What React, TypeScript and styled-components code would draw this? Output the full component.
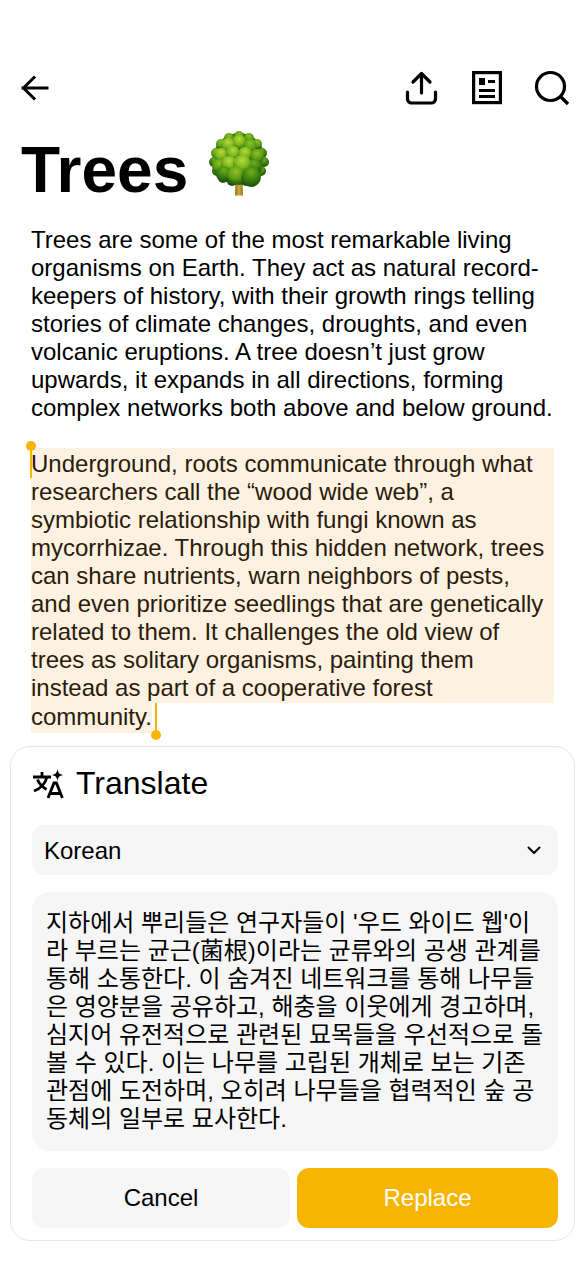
import React from 'react'
import styled, { createGlobalStyle } from 'styled-components'

const GlobalStyle = createGlobalStyle`
  html, body {
    margin: 0;
    padding: 0;
    background: #fff;
  }
  body {
    font-family: "Liberation Sans", Arial, "Noto Sans CJK KR", sans-serif;
    color: #000;
  }
`

const Page = styled.div`
  width: 585px;
  height: 1266px;
  overflow: hidden;
  box-sizing: border-box;
  padding-top: 70px;
`

const TopBar = styled.header`
  display: flex;
  justify-content: space-between;
  align-items: center;
  height: 36px;
  padding: 0 15px 0 20px;
`

const IconRow = styled.div`
  display: flex;
  align-items: center;
  gap: 31px;
`

const Title = styled.h1`
  display: flex;
  align-items: center;
  gap: 21px;
  margin: 23px 0 0 21px;
  height: 70px;
  font-size: 64px;
  line-height: 70px;
  font-weight: 700;
`

const TitleText = styled.span`
  padding-top: 12px;
`

const Article = styled.article`
  padding: 27px 31px 0;
  font-size: 24px;
  line-height: 28px;
  color: #000;
`

const Paragraph = styled.p`
  margin: 0 0 26px;
  width: 523px;
`

const Selection = styled.div`
  position: relative;
  width: 523px;
  color: #2a1c0a;
`

const SelectedBlock = styled.div`
  background: #fdf1e1;
  padding-top: 2px;
  height: 253px;
`

const SelectedTail = styled.div`
  background: #fdf1e1;
  width: fit-content;
  padding-bottom: 2px;
`

const Handle = styled.span<{ $end?: boolean }>`
  position: absolute;
  width: 2px;
  height: 32px;
  background: #f8b500;
  ${p => (p.$end ? 'left: 124px; bottom: -2px;' : 'left: -1px; top: -2px;')}

  &::after {
    content: "";
    position: absolute;
    left: -4px;
    width: 10px;
    height: 10px;
    border-radius: 50%;
    background: #f8b500;
    ${p => (p.$end ? 'bottom: -5px;' : 'top: -5px;')}
  }
`

const Card = styled.section`
  box-sizing: border-box;
  width: 565px;
  height: 495px;
  margin: 13px 0 0 10px;
  padding: 0 16px 12px 21px;
  border: 1px solid #e6e6e6;
  border-radius: 20px;
  display: flex;
  flex-direction: column;
`

const CardHead = styled.div`
  display: flex;
  align-items: center;
  gap: 12px;
  height: 73px;
  font-size: 32px;
  flex: none;
`

const Select = styled.div`
  display: flex;
  align-items: center;
  justify-content: space-between;
  height: 50px;
  margin-top: 5px;
  padding: 1px 17px 0 12px;
  box-sizing: border-box;
  background: #f6f6f6;
  border-radius: 12px;
  font-size: 24px;
  flex: none;
`

const Output = styled.div`
  margin-top: 17px;
  height: 259px;
  box-sizing: border-box;
  padding: 17px 14px 0;
  background: #f6f6f6;
  border-radius: 18px;
  font-family: "Liberation Sans", "Noto Sans CJK KR", sans-serif;
  font-size: 24px;
  line-height: 28px;
  flex: none;
`

const Actions = styled.div`
  display: grid;
  grid-template-columns: 258px 261px;
  gap: 7px;
  margin-top: 17px;
`

const Button = styled.button<{ $primary?: boolean }>`
  height: 60px;
  border: 0;
  border-radius: 12px;
  font-family: inherit;
  font-size: 24px;
  color: ${p => (p.$primary ? '#fff' : '#000')};
  background: ${p => (p.$primary ? '#f8b500' : '#f6f6f6')};
`

const BackIcon = () => (
  <svg width="30" height="30" viewBox="0 0 30 30" fill="none" stroke="#000" strokeWidth="3" strokeLinecap="square">
    <path d="M3 15h24M14 4.500L3.500 15 14 25.500" />
  </svg>
)

const ShareIcon = () => (
  <svg width="35" height="34" viewBox="0 0 35 34" fill="none" stroke="#000" strokeWidth="3.2" strokeLinecap="round" strokeLinejoin="round">
    <path d="M16.500 22V3M8 11l8.500-8.500L25 11" />
    <path d="M2.500 21v7a4 4 0 0 0 4 4h20a4 4 0 0 0 4-4v-7" />
  </svg>
)

const ArticleIcon = () => (
  <svg width="32" height="36" viewBox="0 0 32 36">
    <rect x="2.600" y="2.600" width="26.800" height="30" fill="none" stroke="#000" strokeWidth="3.2" />
    <rect x="8" y="8" width="6" height="7" fill="#000" />
    <rect x="17" y="10" width="7" height="3" fill="#000" />
    <rect x="8" y="19" width="16" height="3" fill="#000" />
    <rect x="8" y="25" width="16" height="3" fill="#000" />
  </svg>
)

const SearchIcon = () => (
  <svg width="36" height="36" viewBox="0 0 36 36" fill="none" stroke="#000" strokeWidth="3.2">
    <circle cx="16.500" cy="16.500" r="14" />
    <path d="M26.500 26.500l7.500 7.500" />
  </svg>
)

// crown clusters of the tree emoji, back to front: x, y, radius, gradient
const blobs: [number, number, number, string][] = [
  [30, 5, 5, 'mid'], [20, 7, 5, 'mid'], [40, 7, 5, 'mid'], [12, 13, 5, 'mid'], [48, 13, 5, 'mid'],
  [7, 22, 5, 'mid'], [53, 22, 5, 'dark'], [5, 31, 5, 'dark'], [55, 31, 5, 'dark'], [8, 40, 5, 'dark'],
  [52, 40, 5, 'dark'], [14, 47, 5, 'deep'], [46, 47, 5, 'deep'], [23, 50, 5, 'deep'], [37, 50, 5, 'deep'],
  [30, 11, 7, 'lime'], [19, 14, 7, 'lime'], [41, 15, 7, 'mid'], [12, 24, 7, 'lime'], [24, 22, 7, 'lime'],
  [36, 23, 7, 'lime'], [48, 25, 7, 'mid'], [10, 35, 7, 'mid'], [45, 36, 8, 'dark'], [20, 33, 8, 'lime'],
  [33, 33, 9, 'lime'], [15, 43, 8, 'dark'], [27, 44, 9, 'mid'], [42, 46, 10, 'dark'],
]

const TreeEmoji = () => (
  <svg width="60" height="66" viewBox="0 0 60 66">
    <defs>
      <radialGradient id="lime" cx="50%" cy="30%" r="65%">
        <stop offset="0" stopColor="#b4dc3a" />
        <stop offset="0.6" stopColor="#7db61e" />
        <stop offset="1" stopColor="#3d7a10" />
      </radialGradient>
      <radialGradient id="mid" cx="50%" cy="30%" r="65%">
        <stop offset="0" stopColor="#8cc424" />
        <stop offset="0.65" stopColor="#5c9c16" />
        <stop offset="1" stopColor="#31690e" />
      </radialGradient>
      <radialGradient id="dark" cx="50%" cy="25%" r="70%">
        <stop offset="0" stopColor="#6fae1c" />
        <stop offset="0.6" stopColor="#3c7e10" />
        <stop offset="1" stopColor="#1f5408" />
      </radialGradient>
      <radialGradient id="deep" cx="50%" cy="25%" r="70%">
        <stop offset="0" stopColor="#3e7e12" />
        <stop offset="1" stopColor="#184a08" />
      </radialGradient>
      <linearGradient id="trunk" x1="0" x2="1" y1="0" y2="0">
        <stop offset="0" stopColor="#8a6a1e" />
        <stop offset="0.5" stopColor="#d0ac3c" />
        <stop offset="1" stopColor="#94731f" />
      </linearGradient>
    </defs>
    <path d="M26.500 50h7l.5 14.500h-8z" fill="url(#trunk)" />
    <circle cx="30" cy="28" r="26" fill="#2f6a0e" />
    {blobs.map(([cx, cy, r, tone]) => (
      <circle key={`${cx}-${cy}`} cx={cx} cy={cy} r={r} fill={`url(#${tone})`} />
    ))}
  </svg>
)

const TranslateIcon = () => (
  <svg width="32" height="30" viewBox="0 0 32 30" fill="none" stroke="#000" strokeWidth="2.800">
    <path d="M1 8h18M10 3v5M15 8c-1.500 6-6.500 11.500-13 14M5.500 10.500c1.500 4 5 7.500 9 10" />
    <path d="M16 29l6-15h2.400l6 15M18 24.500h10.500" />
    <path d="M25.500 0c.7 4.200 1.800 5.300 6 6-4.200.7-5.300 1.800-6 6-.7-4.200-1.800-5.300-6-6 4.200-.7 5.300-1.800 6-6z" fill="#000" stroke="none" />
  </svg>
)

const ChevronIcon = () => (
  <svg width="14" height="9" viewBox="0 0 14 9" fill="none" stroke="#000" strokeWidth="2" strokeLinecap="round" strokeLinejoin="round">
    <path d="M1.500 1.500L7 7l5.500-5.500" />
  </svg>
)

export default function App() {
  return (
    <Page>
      <GlobalStyle />
      <TopBar>
        <BackIcon />
        <IconRow>
          <ShareIcon />
          <ArticleIcon />
          <SearchIcon />
        </IconRow>
      </TopBar>
      <Title>
        <TitleText>Trees</TitleText>
        <TreeEmoji />
      </Title>
      <Article>
        <Paragraph>
          Trees are some of the most remarkable living organisms on Earth. They act as natural record-keepers of history, with their growth rings telling stories of climate changes, droughts, and even volcanic eruptions. A tree doesn’t just grow upwards, it expands in all directions, forming complex networks both above and below ground.
        </Paragraph>
        <Selection>
          <Handle />
          <SelectedBlock>
            Underground, roots communicate through what researchers call the “wood wide web”, a symbiotic relationship with fungi known as mycorrhizae. Through this hidden network, trees can share nutrients, warn neighbors of pests, and even prioritize seedlings that are genetically related to them. It challenges the old view of trees as solitary organisms, painting them instead as part of a cooperative forest
          </SelectedBlock>
          <SelectedTail>community.</SelectedTail>
          <Handle $end />
        </Selection>
      </Article>
      <Card>
        <CardHead>
          <TranslateIcon />
          Translate
        </CardHead>
        <Select>
          Korean
          <ChevronIcon />
        </Select>
        <Output>
          지하에서 뿌리들은 연구자들이 '우드 와이드 웹'이라 부르는 균근(菌根)이라는 균류와의 공생 관계를 통해 소통한다. 이 숨겨진 네트워크를 통해 나무들은 영양분을 공유하고, 해충을 이웃에게 경고하며, 심지어 유전적으로 관련된 묘목들을 우선적으로 돌볼 수 있다. 이는 나무를 고립된 개체로 보는 기존 관점에 도전하며, 오히려 나무들을 협력적인 숲 공동체의 일부로 묘사한다.
        </Output>
        <Actions>
          <Button>Cancel</Button>
          <Button $primary>Replace</Button>
        </Actions>
      </Card>
    </Page>
  )
}
